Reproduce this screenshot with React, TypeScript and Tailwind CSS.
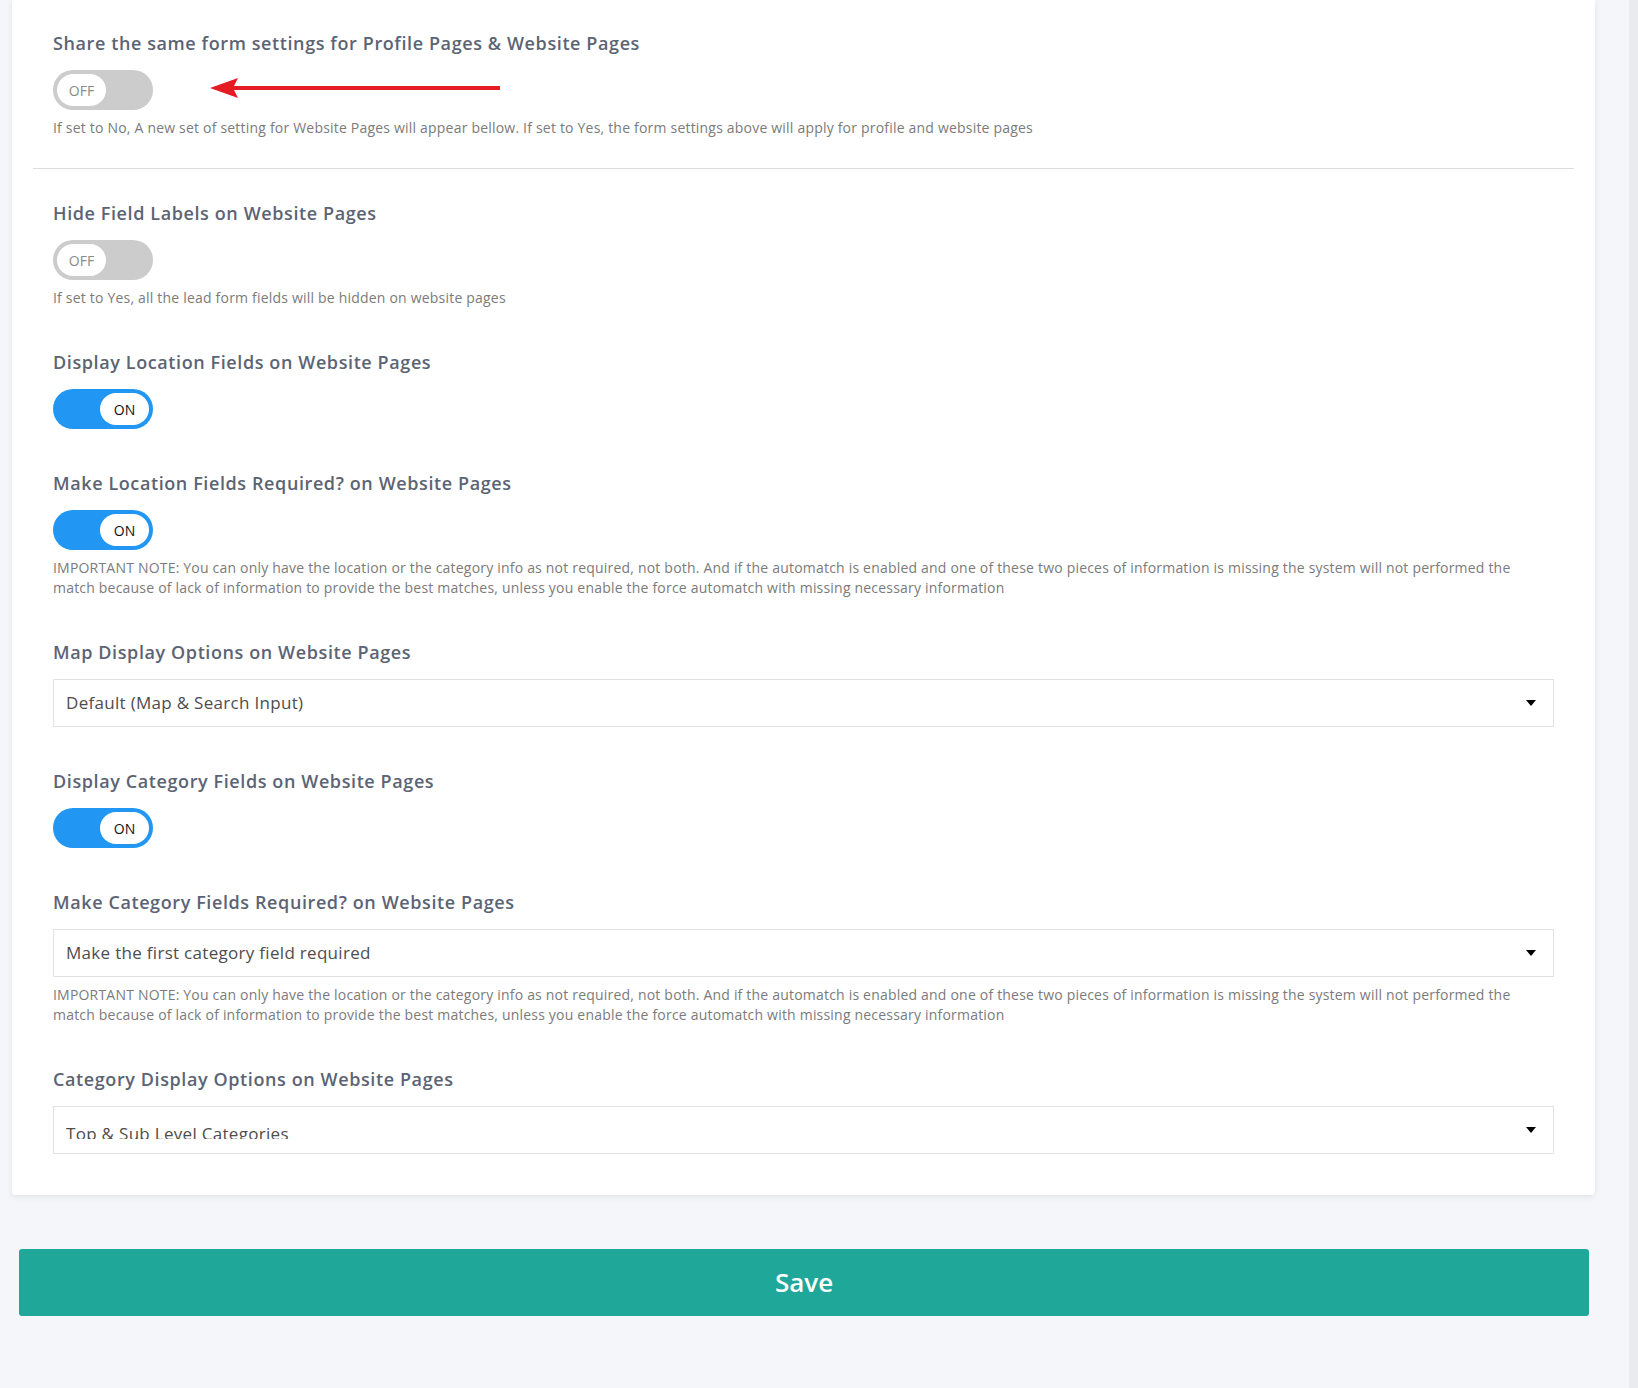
import React from "react";

const NOTE =
  "IMPORTANT NOTE: You can only have the location or the category info as not required, not both. And if the automatch is enabled and one of these two pieces of information is missing the system will not performed the";
const NOTE_2 =
  "match because of lack of information to provide the best matches, unless you enable the force automatch with missing necessary information";

function Toggle({ on }: { on: boolean }) {
  return (
    <div
      className={
        on
          ? "flex h-[40px] w-[100px] items-center justify-end rounded-full bg-[#2196f3] p-[4px]"
          : "flex h-[40px] w-[100px] items-center justify-start rounded-full bg-[#cccccc] p-[4px]"
      }
    >
      <span
        className={
          on
            ? "flex h-[32px] w-[49px] items-center justify-center rounded-full bg-white text-[14px] text-[#111]"
            : "flex h-[32px] w-[49px] items-center justify-center rounded-full bg-white text-[14px] text-[#8a8a8a]"
        }
      >
        {on ? "ON" : "OFF"}
      </span>
    </div>
  );
}

function Label({ children }: { children: React.ReactNode }) {
  return (
    <h3 className="h-[26px] whitespace-nowrap text-[18px] font-semibold leading-[26px] tracking-[0.6px] text-[#5c6474]">
      {children}
    </h3>
  );
}

function Help({ children }: { children: React.ReactNode }) {
  return <p className="mt-[8px] text-[14px] leading-[20px] tracking-[0.2px] text-[#7b7b7b]">{children}</p>;
}

function Select({ value, clipped }: { value: string; clipped?: boolean }) {
  return (
    <div className="flex h-[48px] items-center justify-between border border-[#e2e2e2] bg-white pl-[12px] pr-[17px]">
      {clipped ? (
        <span className="mt-[3px] block h-[15px] overflow-hidden text-[17px] leading-[20px] tracking-[0.3px] text-[#4d4d4d]">
          {value}
        </span>
      ) : (
        <span className="text-[17px] tracking-[0.3px] text-[#4d4d4d]">{value}</span>
      )}
      <span className="h-0 w-0 border-x-[5px] border-t-[6px] border-x-transparent border-t-black" />
    </div>
  );
}

function Section({ title, children }: { title: string; children: React.ReactNode }) {
  return (
    <div className="px-[20px]">
      <Label>{title}</Label>
      <div className="mt-[14px]">{children}</div>
    </div>
  );
}

export default function App() {
  return (
    <div className="flex min-h-[1388px] w-full bg-[#f4f6fa] font-['Open_Sans','Liberation_Sans',sans-serif]">
      <div className="flex-1 pl-[12px] pr-[34px]">
        {/* settings card */}
        <div className="rounded-b-[4px] bg-white px-[21px] pb-[41px] pt-[30px] shadow-[0_2px_6px_rgba(0,0,0,0.08)]">
          <Section title="Share the same form settings for Profile Pages & Website Pages">
            <div className="flex items-center gap-[57px]">
              <Toggle on={false} />
              <svg className="mb-[4px]" width="292" height="22" viewBox="0 0 292 22">
                <path d="M0 11 L28 1 L24 9 L290 9 L290 13 L24 13 L28 21 Z" fill="#e51c24" />
                <rect x="284" y="9" width="6" height="4" rx="2" fill="#e51c24" />
              </svg>
            </div>
            <Help>
              If set to No, A new set of setting for Website Pages will appear bellow. If set to Yes, the form settings
              above will apply for profile and website pages
            </Help>
          </Section>

          <hr className="mb-[31px] mt-[30px] border-t border-[#dddddd]" />

          <div className="flex flex-col gap-[41px]">
            <Section title="Hide Field Labels on Website Pages">
              <Toggle on={false} />
              <Help>If set to Yes, all the lead form fields will be hidden on website pages</Help>
            </Section>

            <Section title="Display Location Fields on Website Pages">
              <Toggle on />
            </Section>

            <Section title="Make Location Fields Required? on Website Pages">
              <Toggle on />
              <Help>
                {NOTE}
                <br />
                {NOTE_2}
              </Help>
            </Section>

            <Section title="Map Display Options on Website Pages">
              <Select value="Default (Map & Search Input)" />
            </Section>

            <Section title="Display Category Fields on Website Pages">
              <Toggle on />
            </Section>

            <Section title="Make Category Fields Required? on Website Pages">
              <Select value="Make the first category field required" />
              <Help>
                {NOTE}
                <br />
                {NOTE_2}
              </Help>
            </Section>

            <Section title="Category Display Options on Website Pages">
              <Select value="Top & Sub Level Categories" clipped />
            </Section>
          </div>
        </div>

        <button className="mx-[7px] mt-[54px] flex h-[67px] w-[calc(100%-13px)] items-center justify-center rounded-[3px] bg-[#1fa79a] text-[26px] font-semibold text-white">
          Save
        </button>
      </div>

      {/* page scrollbar */}
      <div className="w-[9px] bg-[#e9ebef]" />
    </div>
  );
}
